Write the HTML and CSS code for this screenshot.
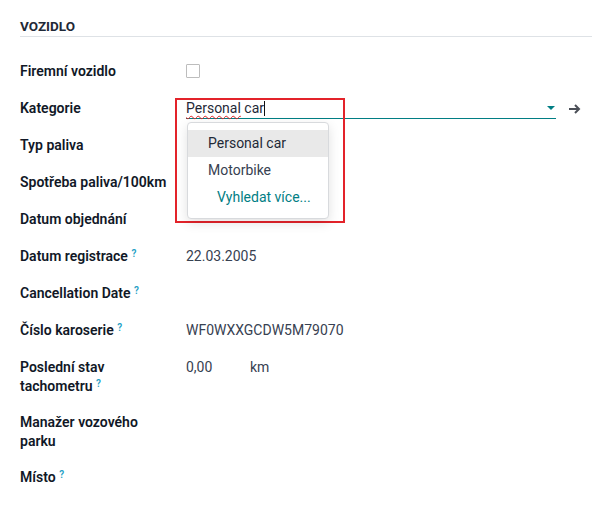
FILE: index.html
```html
<!DOCTYPE html>
<html lang="cs">
<head>
<meta charset="utf-8">
<link rel="stylesheet" href="styles.css">
</head>
<body>
<div class="sheet">
  <div class="section-title">VOZIDLO</div>
  <div class="rows">
    <div class="row">
      <div class="label">Firemní vozidlo</div>
      <div class="value"><span class="checkbox"></span></div>
    </div>
    <div class="row">
      <div class="label">Kategorie</div>
      <div class="value">
        <div class="m2o">
          <div class="m2o-input">
            <span class="typed"><span class="spell">Personal</span> car<span class="caret"></span></span>
            <span class="dd-caret"></span>
          </div>
          <svg class="arrow" width="14" height="12" viewBox="0 0 14 12"><path d="M1 6h10M7 2l4 4-4 4" fill="none" stroke="#4b4f57" stroke-width="2"/></svg>
          <div class="highlight-box"></div>
          <ul class="dropdown">
            <li class="active">Personal car</li>
            <li>Motorbike</li>
            <li class="more">Vyhledat více...</li>
          </ul>
        </div>
      </div>
    </div>
    <div class="row">
      <div class="label">Typ paliva</div>
      <div class="value"></div>
    </div>
    <div class="row">
      <div class="label">Spotřeba paliva/100km</div>
      <div class="value"></div>
    </div>
    <div class="row">
      <div class="label">Datum objednání</div>
      <div class="value"></div>
    </div>
    <div class="row">
      <div class="label">Datum registrace <sup class="help">?</sup></div>
      <div class="value">22.03.2005</div>
    </div>
    <div class="row">
      <div class="label">Cancellation Date <sup class="help">?</sup></div>
      <div class="value"></div>
    </div>
    <div class="row">
      <div class="label">Číslo karoserie <sup class="help">?</sup></div>
      <div class="value">WF0WXXGCDW5M79070</div>
    </div>
    <div class="row">
      <div class="label">Poslední stav tachometru <sup class="help">?</sup></div>
      <div class="value"><span class="num">0,00</span><span class="unit">km</span></div>
    </div>
    <div class="row">
      <div class="label">Manažer vozového parku</div>
      <div class="value"></div>
    </div>
    <div class="row">
      <div class="label">Místo <sup class="help">?</sup></div>
      <div class="value"></div>
    </div>
  </div>
</div>
</body>
</html>
```

FILE: styles.css
```css
* { box-sizing: border-box; }
html, body { margin: 0; padding: 0; background: #fff; }
body {
  font-family: Roboto, "Noto Sans", sans-serif;
  font-size: 14px;
  color: #374151;
}
.sheet { padding: 18px 7px 0 20px; }
.section-title {
  font-weight: 700;
  color: #1f2937;
  font-size: 13.5px;
  line-height: 16px;
  padding-bottom: 2px;
  border-bottom: 1px solid #dee2e6;
  margin-bottom: 24px;
}
.rows { display: flex; flex-direction: column; gap: 16px; }
.row { display: flex; min-height: 21px; align-items: flex-start; }
.label {
  width: 166px;
  flex: none;
  padding-right: 14px;
  font-weight: 600;
  color: #111827;
  line-height: 19px;
  padding-top: 1px;
}
.help {
  color: #1f9fc5;
  font-size: 10px;
  font-weight: 600;
  vertical-align: 4px;
  line-height: 0;
}
.value { flex: 1; line-height: 21px; color: #374151; }
.checkbox {
  display: inline-block;
  width: 14px; height: 14px;
  border: 1px solid #bdbdbd;
  border-radius: 1px;
  vertical-align: middle;
  margin-top: -2px;
}
.num { display: inline-block; width: 64px; }
.m2o { position: relative; display: flex; align-items: center; }
.m2o-input {
  width: 370px;
  height: 21px;
  border-bottom: 1px solid #017e84;
  display: flex;
  align-items: center;
  justify-content: space-between;
}
.typed { color: #1f2937; position: relative; }
.spell {
  text-decoration: underline wavy #e02424;
  text-decoration-thickness: 1px;
  text-underline-offset: 2px;
}
.caret {
  display: inline-block;
  width: 1px; height: 15px;
  background: #111;
  vertical-align: -3px;
}
.dd-caret {
  width: 0; height: 0;
  border-left: 4px solid transparent;
  border-right: 4px solid transparent;
  border-top: 4px solid #017e84;
  margin-right: 1px;
}
.arrow { margin-left: 12px; }
.highlight-box {
  position: absolute;
  left: -11px; top: 0px;
  width: 170px; height: 125px;
  border: 2.5px solid #e3232a;
  pointer-events: none;
}
.dropdown {
  position: absolute;
  left: 1px; top: 24px;
  width: 142px;
  margin: 0; padding: 7px 0 0;
  list-style: none;
  background: #fff;
  border: 1px solid #d8dadd;
  border-radius: 4px;
  box-shadow: 0 4px 12px rgba(0,0,0,0.12);
  height: 97px;
  z-index: 2;
}
.dropdown li {
  height: 27px;
  line-height: 27px;
  padding-left: 20px;
  color: #374151;
  font-size: 14px;
}
.dropdown li.active { background: #e9e9e9; color: #1f2937; }
.dropdown li.more { color: #017e84; padding-left: 29px; }
```
